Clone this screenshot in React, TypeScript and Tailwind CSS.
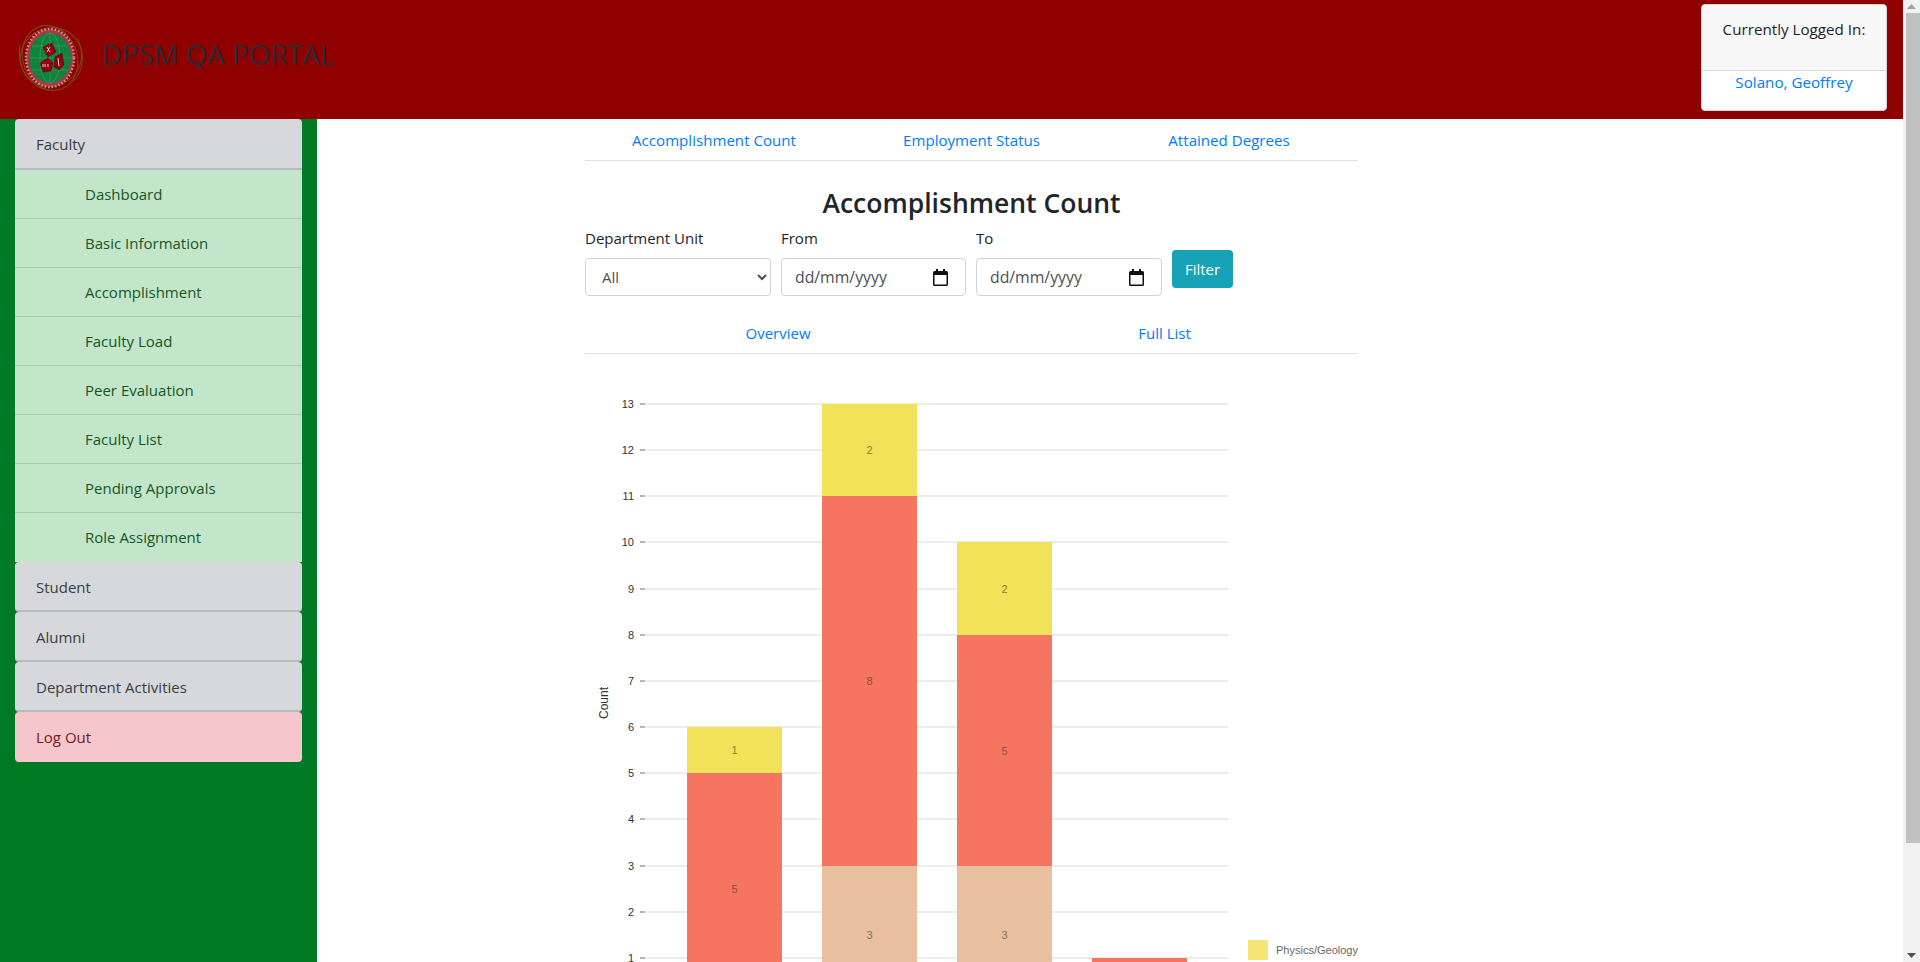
import React from "react";

const font = { fontFamily: '"Open Sans", "Noto Sans", sans-serif' };

const children = ["Dashboard", "Basic Information", "Accomplishment", "Faculty Load", "Peer Evaluation", "Faculty List", "Pending Approvals", "Role Assignment"];

function Logo() {
  return (
    <svg width="72" height="72" viewBox="0 0 72 72" className="shrink-0">
      <g fill="none" stroke="#7c4a1a" strokeWidth="1">
        <ellipse cx="35" cy="37" rx="33" ry="27" transform="rotate(70 35 37)" />
        <ellipse cx="36" cy="36" rx="31" ry="29" transform="rotate(-25 36 36)" />
        <path d="M5 24C1 45 14 67 34 69M62 18c9 14 7 36-8 45" />
      </g>
      <ellipse cx="35" cy="37" rx="24" ry="29" fill="#a53a45" />
      <ellipse cx="35" cy="37" rx="24" ry="29" fill="none" stroke="#d58d95" strokeWidth="2.500" strokeDasharray="1.5 2" />
      <ellipse cx="35" cy="37" rx="21" ry="25" fill="#12833f" />
      <g fill="none" stroke="#53a270" strokeWidth="0.5">
        <ellipse cx="35" cy="37" rx="10" ry="25" />
        <path d="M14 37h42M17 25h36M17 49h36M35 12v50" />
      </g>
      <path d="M28 26l9-4 4 9-8 5z" fill="#8f0010" stroke="#5d0008" strokeWidth="0.5" />
      <path d="M25 42l8-5 5 5-2 8-8 1z" fill="#8f0010" stroke="#5d0008" strokeWidth="0.5" />
      <path d="M40 36l7-4 2 12-5 5-5-3z" fill="#8f0010" stroke="#5d0008" strokeWidth="0.5" />
      <path d="M32 26l3 5M35 26l-3 5M28 43v3M30 43v3M33 43v3M43 37l1 8" fill="none" stroke="#f3e6e6" strokeWidth="0.9" />
    </svg>
  );
}

const yTicks = [13, 12, 11, 10, 9, 8, 7, 6, 5, 4, 3, 2, 1];
const yOf = (v: number) => Math.round(958 + (1 - v) * 46.17) - 355;

const bars = [
  { x: 102, segs: [[6, 5, "#f2e25a", 1, "#857f3b"], [5, 0, "#f67561", 5, "#8d4f45"]] },
  { x: 237, segs: [[13, 11, "#f2e25a", 2, "#857f3b"], [11, 3, "#f67561", 8, "#8d4f45"], [3, 0, "#e8c0a0", 3, "#84705f"]] },
  { x: 372, segs: [[10, 8, "#f2e25a", 2, "#857f3b"], [8, 3, "#f67561", 5, "#8d4f45"], [3, 0, "#e8c0a0", 3, "#84705f"]] },
  { x: 507, segs: [[1, 0, "#f67561", "", "#8d4f45"]] },
] as const;

function Chart() {
  return (
    <svg width="773" height="607" viewBox="0 0 773 607" className="block mt-[1px]" style={{ fontFamily: '"Liberation Sans", Arial, sans-serif' }}>
      {yTicks.map((t) => (
        <g key={t}>
          <rect x="55" y={yOf(t) - 1} width="588" height="2" fill="#ececec" />
          <rect x="55" y={yOf(t) - 1} width="5" height="2" fill="#b5b5b5" />
          <text x="49" y={yOf(t) + 4} textAnchor="end" fontSize="11" fill="#333">{t}</text>
        </g>
      ))}
      <text transform={`translate(23 ${703 - 355}) rotate(-90)`} textAnchor="middle" fontSize="12" fill="#333">Count</text>
      {bars.map((b) =>
        b.segs.map(([a, c, fill, label, ink]) => (
          <g key={`${b.x}-${a}`}>
            <rect x={b.x} y={yOf(a)} width="95" height={yOf(c) - yOf(a)} fill={fill} />
            <text x={b.x + 47.5} y={(yOf(a) + yOf(c)) / 2 + 4} textAnchor="middle" fontSize="11" fill={ink}>{label}</text>
          </g>
        ))
      )}
      <rect x="663" y="585" width="20" height="20" fill="#f4e575" />
      <text x="691" y="599" fontSize="11" fill="#666">Physics/Geology</text>
    </svg>
  );
}

function Field({ label, wide, children: c }: { label: string; wide?: boolean; children: React.ReactNode }) {
  return (
    <div className={`${wide ? "w-[186px]" : "w-[185px]"} flex flex-col`}>
      <div className="h-[24px] leading-[22px] text-[15px] text-[#212529] mb-[7px]">{label}</div>
      {c}
    </div>
  );
}

function DateBox() {
  return (
    <div className="h-[38px] border border-[#ced4da] rounded-[4px] bg-white flex items-center justify-between pl-[13px] pr-[17px] text-[15.8px] text-[#495057]">
      <span className="pt-[2px]">dd/mm/yyyy</span>
      <svg width="15" height="17" viewBox="0 0 15 17">
        <path d="M3 0h2v2h5V0h2v2h1.500A1.500 1.500 0 0 1 15 3.500v12a1.500 1.500 0 0 1-1.500 1.500h-12A1.500 1.500 0 0 1 0 15.500v-12A1.500 1.500 0 0 1 1.500 2H3zM1.500 6v9.500h12V6z" fill="#111" />
      </svg>
    </div>
  );
}

export default function App() {
  return (
    <div className="flex h-[962px] w-full overflow-hidden bg-white text-[15px]" style={font}>
      <div className="w-[1903px] shrink-0 flex flex-col">
        <header className="h-[119px] shrink-0 bg-[#8f0000] flex items-start pl-[15px] relative">
          <div className="mt-[21px] flex items-center">
            <Logo />
            <h1 className="ml-[15px] text-[27.7px] leading-[32px] text-[#2a2a30] mb-[6px]">DPSM QA PORTAL</h1>
          </div>
          <div className="absolute left-[1701px] top-[4px] w-[186px] h-[107px] bg-white rounded-[4px] border border-[#d5d5d5] overflow-hidden flex flex-col">
            <div className="h-[66px] bg-[#f7f7f7] border-b border-[#d8d8d8] text-center pt-[13px] text-[#212529] text-[15.2px]">Currently Logged In:</div>
            <div className="text-center text-[#007bff] text-[15.2px]">Solano, Geoffrey</div>
          </div>
        </header>
        <div className="flex flex-1 min-h-0">
          <aside className="w-[317px] shrink-0 bg-[#007a25] px-[15px]">
            <div className="h-[51px] bg-[#d6d8db] text-[#383d41] rounded-t-[4px] border-b-2 border-[#b9bbbe] pl-[21px] pt-[2px] flex items-center">Faculty</div>
            <div className="flex flex-col">
              {children.map((c, i) => (
                <div key={c} className={`h-[49px] bg-[#c3e6cb] text-[#155724] pl-[70px] flex items-center ${i < 7 ? "border-b border-[#a9cdb2]" : ""}`}>{c}</div>
              ))}
            </div>
            {["Student", "Alumni", "Department Activities"].map((s) => (
              <div key={s} className="h-[50px] bg-[#d6d8db] text-[#383d41] rounded-[4px] border-b-2 border-[#b9bbbe] pl-[21px] pt-[2px] flex items-center">{s}</div>
            ))}
            <div className="h-[50px] bg-[#f5c6cb] text-[#721c24] rounded-[4px] pl-[21px] flex items-center">Log Out</div>
          </aside>
          <main className="flex-1 min-w-0 pl-[268px]">
            <div className="w-[773px]">
              <nav className="h-[42px] border-b border-[#dee2e6] flex items-center text-[#007bff] text-center pt-[1px] text-[15.1px]">
                <span className="w-[258px]">Accomplishment Count</span>
                <span className="w-[257px]">Employment Status</span>
                <span className="w-[258px]">Attained Degrees</span>
              </nav>
              <h2 className="mt-[24px] h-[36px] leading-[36px] text-center text-[26.5px] font-semibold text-[#212529]">Accomplishment Count</h2>
              <div className="mt-[6px] flex gap-[10px] items-start">
                <Field label="Department Unit" wide>
                  <select className="h-[38px] w-full border border-[#ced4da] rounded-[4px] bg-white pl-[12px] pr-[4px] text-[15px] text-[#495057]">
                    <option>All</option>
                  </select>
                </Field>
                <Field label="From"><DateBox /></Field>
                <Field label="To" wide><DateBox /></Field>
                <button className="mt-[23px] w-[61px] h-[38px] bg-[#17a2b8] text-white rounded-[4px]">Filter</button>
              </div>
              <nav className="mt-[17px] h-[41px] border-b border-[#dee2e6] flex items-center text-[#007bff] text-center pt-[1px]">
                <span className="w-[386px]">Overview</span>
                <span className="w-[387px]">Full List</span>
              </nav>
              <Chart />
            </div>
          </main>
        </div>
      </div>
      <div className="w-[17px] shrink-0 bg-[#f1f1f1] flex flex-col items-end">
        <div className="h-[13px] w-full flex items-center justify-center">
          <svg width="9" height="5" viewBox="0 0 9 5"><path d="M4.500 0L9 5H0z" fill="#a3a3a3" /></svg>
        </div>
        <div className="w-[14px] h-[830px] bg-[#c1c1c1]" />
        <div className="flex-1 w-full flex items-end justify-center pb-[4px]">
          <svg width="9" height="5" viewBox="0 0 9 5"><path d="M0 0h9L4.500 5z" fill="#505050" /></svg>
        </div>
      </div>
    </div>
  );
}
